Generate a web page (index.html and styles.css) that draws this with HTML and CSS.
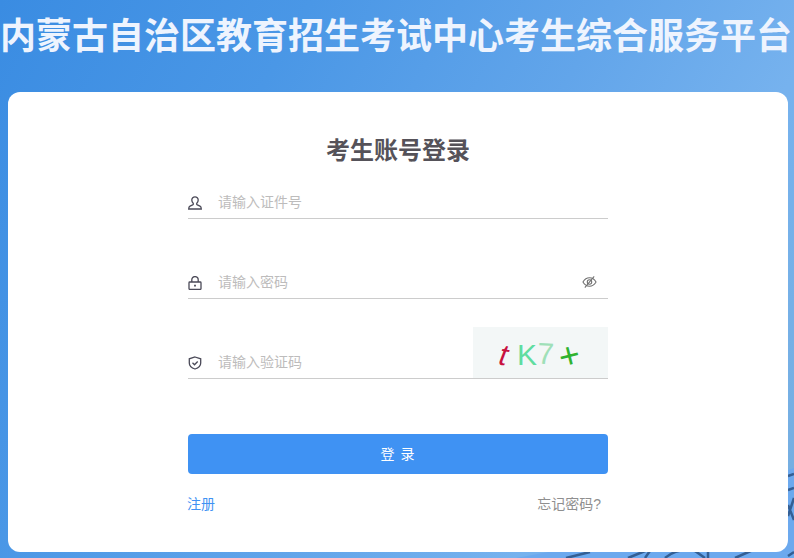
FILE: index.html
```html
<!DOCTYPE html>
<html lang="zh-CN">
<head>
<meta charset="utf-8">
<title>考生账号登录</title>
<link rel="stylesheet" href="styles.css">
</head>
<body>
<svg class="deco" viewBox="0 0 794 558" aria-hidden="true">
  <polygon class="deco-patch" points="516,558 570,548 794,468 794,558" />
  <path class="deco-line" d="M566 558 L590 552 M628 558 L650 549 M645 558 L652 548 M665 558 C672 552 682 548 695 551 L705 558 M708 558 L708 550 L745 549 M735 558 L762 546 M788 476 L794 474 M788 490 L794 488 M788 516 L794 498 M788 505 L794 520 M788 556 L794 552" />
</svg>
<h1 class="site-title">内蒙古自治区教育招生考试中心考生综合服务平台</h1>
<main class="card">
  <h2 class="card-title">考生账号登录</h2>
  <form class="form">
    <div class="field">
      <svg class="icon" viewBox="0 0 14 14"><path d="M7 .8a3.200 3.200 0 0 0-3.200 3.200c0 1.500.7 2.600 1.400 3.300.4.500.2 1.300-.5 1.600L2 10.200c-.8.400-1.300 1.100-1.300 2.800h12.600c0-1.700-.5-2.400-1.300-2.800L9.300 8.900c-.7-.3-.9-1.100-.5-1.600.7-.7 1.400-1.800 1.400-3.300A3.200 3.200 0 0 0 7 .8z"/></svg>
      <span class="placeholder">请输入证件号</span>
    </div>
    <div class="field">
      <svg class="icon" viewBox="0 0 14 14"><rect x="1" y="6" width="12" height="7.400" rx=".8"/><path d="M3.800 6V3.800a3.200 3.200 0 0 1 6.400 0V6"/><path d="M7 8.800v1.800" stroke-width="1.800"/></svg>
      <span class="placeholder">请输入密码</span>
      <svg class="eye" viewBox="0 0 16 14"><path d="M1 7c1.800-3 4-4.500 7-4.500S13.200 4 15 7c-1.800 3-4 4.500-7 4.500S2.800 10 1 7z"/><circle cx="8" cy="7" r="2.400"/><path d="M13 1 3 13"/></svg>
    </div>
    <div class="field">
      <svg class="icon" viewBox="0 0 14 14"><path d="M7 1 12.700 2.800V7c0 3-2.400 5-5.700 6C3.700 12 1.300 10 1.300 7V2.800z"/><path d="M4.500 6.800 6.500 8.800 9.700 5.500"/></svg>
      <span class="placeholder">请输入验证码</span>
      <svg class="captcha" viewBox="0 0 135 51">
        <text class="cap-t" x="26" y="38" transform="rotate(10 30 30)">t</text>
        <text class="cap-k" x="44" y="38">K</text>
        <text class="cap-7" x="64" y="37" transform="rotate(3 74 30)">7</text>
        <text class="cap-x" x="86" y="41" transform="rotate(-14 96 30)">+</text>
      </svg>
    </div>
    <button class="submit" type="button">登 录</button>
    <div class="links">
      <a class="register" href="#">注册</a>
      <a class="forgot" href="#">忘记密码?</a>
    </div>
  </form>
</main>
</body>
</html>
```
FILE: styles.css
```css
* { box-sizing: border-box; }
html, body { height: 100%; }
body {
  margin: 0;
  height: 558px;
  overflow: hidden;
  position: relative;
  padding: 0 6px 6px 8px;
  display: flex;
  flex-direction: column;
  font-family: "Liberation Sans", "Noto Sans CJK SC", sans-serif;
  background: linear-gradient(120deg, #3a8ce2 0%, #4a97e6 28%, #62a5ea 55%, #76b2ee 75%, #76aedf 100%);
}
.deco { position: absolute; inset: 0; width: 794px; height: 558px; }
.deco-patch { fill: #6ca9ee; }
.deco-line { fill: none; stroke: #345f94; stroke-width: 2.500; }
.site-title {
  position: relative;
  margin: 14px -4px 0 -8px;
  height: 78px;
  font-size: 36px;
  line-height: 46px;
  font-weight: 700;
  color: #eef4fe;
  text-align: center;
  white-space: nowrap;
}
.card {
  position: relative;
  flex: 1;
  background: #fff;
  border-radius: 12px;
  padding-top: 44px;
  display: flex;
  flex-direction: column;
  align-items: center;
}
.card-title {
  margin: 0;
  font-size: 24px;
  line-height: 30px;
  font-weight: 700;
  color: #555259;
}
.form { width: 420px; margin-top: 3px; }
.field {
  height: 50px;
  margin-bottom: 30px;
  border-bottom: 1px solid #ccc;
  display: flex;
  align-items: flex-end;
  position: relative;
  padding-bottom: 6px;
}
.icon { width: 14px; height: 14px; fill: none; stroke: #4b4a58; stroke-width: 1.300; flex: none; margin-bottom: 2px; }
.placeholder { margin-left: 17px; font-size: 14px; line-height: 20px; color: #bdbcbc; transform: translateX(-1px); }
.eye { position: absolute; right: 11px; bottom: 9px; width: 15px; height: 14px; fill: none; stroke: #6e6e6e; stroke-width: 1.100; }
.captcha { position: absolute; right: 0; bottom: 0; width: 135px; height: 51px; background: #f3f7f7; }
.captcha text { font-family: "Liberation Sans", sans-serif; font-size: 30px; }
.cap-t { fill: #c8123f; font-style: italic; }
.cap-k { fill: #5fdda0; }
.cap-7 { fill: #9fe0b8; }
.captcha .cap-x { fill: #2fb32f; font-size: 36px; }
.submit {
  display: block;
  width: 100%;
  height: 40px;
  margin-top: 55px;
  padding-bottom: 4px;
  border: 0;
  border-radius: 4px;
  background: #3f92f3;
  color: #fff;
  font-family: inherit;
  font-size: 14px;
  letter-spacing: 1px;
}
.links { display: flex; justify-content: space-between; margin-top: 20px; padding-right: 7px; font-size: 14px; line-height: 20px; }
.links a { text-decoration: none; }
.register { color: #3f92f3; margin-left: -1px; }
.forgot { color: #8f8f8f; }
```
